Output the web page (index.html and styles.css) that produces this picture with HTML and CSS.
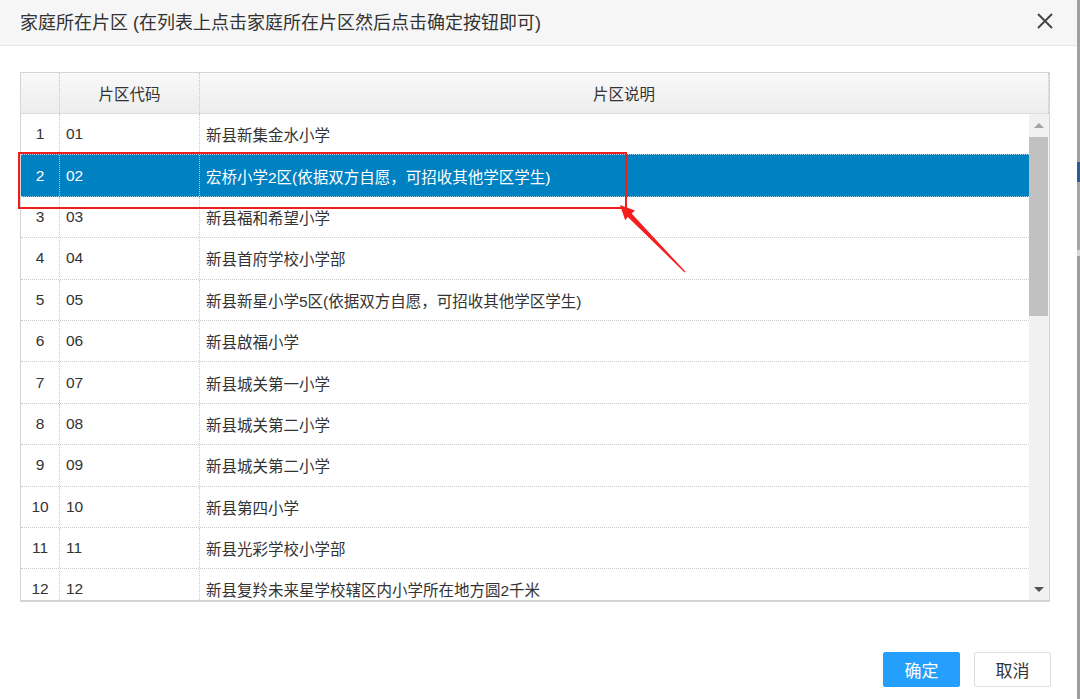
FILE: index.html
```html
<!DOCTYPE html>
<html lang="zh-CN">
<head>
<meta charset="utf-8">
<title>家庭所在片区</title>
<link rel="stylesheet" href="styles.css">
</head>
<body>
<div class="page">
  <div class="dialog">
    <div class="dlg-head">
      <div class="dlg-title">家庭所在片区 (在列表上点击家庭所在片区然后点击确定按钮即可)</div>
      <svg class="dlg-close" width="18" height="18" viewBox="0 0 18 18"><path d="M2 2 L16 16 M16 2 L2 16" stroke="#444" stroke-width="1.9" fill="none"/></svg>
    </div>
    <div class="dlg-body">
      <div class="grid">
        <div class="ghead">
          <div class="c c-num"></div>
          <div class="c c-code">片区代码</div>
          <div class="c c-desc">片区说明</div>
        </div>
        <div class="gbody">
          <div class="rows">
            <div class="row"><div class="c c-num">1</div><div class="c c-code">01</div><div class="c c-desc">新县新集金水小学</div></div>
            <div class="row sel"><div class="c c-num">2</div><div class="c c-code">02</div><div class="c c-desc">宏桥小学2区(依据双方自愿，可招收其他学区学生)</div></div>
            <div class="row"><div class="c c-num">3</div><div class="c c-code">03</div><div class="c c-desc">新县福和希望小学</div></div>
            <div class="row"><div class="c c-num">4</div><div class="c c-code">04</div><div class="c c-desc">新县首府学校小学部</div></div>
            <div class="row"><div class="c c-num">5</div><div class="c c-code">05</div><div class="c c-desc">新县新星小学5区(依据双方自愿，可招收其他学区学生)</div></div>
            <div class="row"><div class="c c-num">6</div><div class="c c-code">06</div><div class="c c-desc">新县啟福小学</div></div>
            <div class="row"><div class="c c-num">7</div><div class="c c-code">07</div><div class="c c-desc">新县城关第一小学</div></div>
            <div class="row"><div class="c c-num">8</div><div class="c c-code">08</div><div class="c c-desc">新县城关第二小学</div></div>
            <div class="row"><div class="c c-num">9</div><div class="c c-code">09</div><div class="c c-desc">新县城关第二小学</div></div>
            <div class="row"><div class="c c-num">10</div><div class="c c-code">10</div><div class="c c-desc">新县第四小学</div></div>
            <div class="row"><div class="c c-num">11</div><div class="c c-code">11</div><div class="c c-desc">新县光彩学校小学部</div></div>
            <div class="row"><div class="c c-num">12</div><div class="c c-code">12</div><div class="c c-desc">新县复羚未来星学校辖区内小学所在地方圆2千米</div></div>
          </div>
          <div class="vscroll">
            <div class="sb-btn"><span class="tri-up"></span></div>
            <div class="sb-thumb"></div>
            <div class="sb-track"></div>
            <div class="sb-btn"><span class="tri-down"></span></div>
          </div>
        </div>
      </div>
      <div class="mark-box"></div>
      <svg class="mark-arrow" width="80" height="80" viewBox="0 0 80 80">
        <polygon points="10,10 25,15.5 21.6,18.6 75.4,76.6 74.6,77.4 17.8,21.9 15.2,25.3" fill="#f51d1d"/>
      </svg>
    </div>
    <div class="dlg-foot">
      <button class="btn btn-primary">确定</button>
      <button class="btn btn-default">取消</button>
    </div>
  </div>
  <div class="behind">
    <div class="bh-a"></div>
    <div class="bh-blue"></div>
    <div class="bh-b"></div>
    <div class="bh-light"></div>
    <div class="bh-c"></div>
  </div>
</div>
</body>
</html>
```
FILE: styles.css
```css
html, body {
  margin: 0;
  padding: 0;
  background: #ffffff;
}
body {
  font-family: "Liberation Sans", "Noto Sans CJK SC", sans-serif;
  color: #333333;
}
.page {
  display: flex;
  width: 1080px;
  height: 699px;
  overflow: hidden;
}
.dialog {
  width: 1077px;
  flex: none;
  display: flex;
  flex-direction: column;
  background: #ffffff;
}
.dlg-head {
  height: 46px;
  box-sizing: border-box;
  background: #f6f6f6;
  border-bottom: 1px solid #e6e6e6;
  display: flex;
  align-items: center;
  justify-content: space-between;
  padding: 0 23px 3px 20px;
}
.dlg-title {
  font-size: 18px;
  color: #333333;
}
.dlg-close {
  display: block;
}
.dlg-body {
  position: relative;
  padding: 26px 0 0 20px;
}
.grid {
  width: 1030px;
  box-sizing: border-box;
  border: 1px solid #d4d4d4;
  border-bottom-width: 2px;
  font-size: 15.5px;
}
.ghead {
  display: flex;
  height: 41px;
  box-sizing: border-box;
  background: linear-gradient(#f9f9f9, #ededed);
  border-bottom: 1px solid #dcdcdc;
}
.ghead .c {
  display: flex;
  align-items: center;
  justify-content: center;
  color: #333333;
  font-size: 15.5px;
}
.c {
  box-sizing: border-box;
  border-right: 1px dotted #c8c8c8;
  white-space: nowrap;
  overflow: hidden;
}
.c-num {
  width: 39px;
  flex: none;
}
.c-code {
  width: 140px;
  flex: none;
}
.c-desc {
  flex: 1;
}
.gbody {
  display: flex;
  height: 486px;
}
.rows {
  flex: 1;
  overflow: hidden;
}
.row {
  display: flex;
  height: 41.4px;
  box-sizing: border-box;
  border-bottom: 1px dotted #cccccc;
}
.row .c {
  display: flex;
  align-items: center;
  color: #333333;
}
.row .c-num {
  justify-content: center;
}
.row .c-code {
  padding-left: 6px;
}
.row .c-desc {
  padding-left: 6px;
  border-right: none;
}
.row.sel {
  background: #0081c2;
  border-top: 1px dotted #9fd0ea;
  border-bottom: 1px dotted #9fd0ea;
  margin-top: -1px;
  height: 42.4px;
}
.row.sel .c {
  color: #ffffff;
  border-right-color: #9fd0ea;
}
.row.sel .c-desc {
  border-right: none;
}
.vscroll {
  width: 20px;
  flex: none;
  background: #f1f1f1;
  display: flex;
  flex-direction: column;
}
.sb-btn {
  height: 23px;
  display: flex;
  align-items: center;
  justify-content: center;
  flex: none;
}
.sb-thumb {
  height: 179px;
  background: #c1c1c1;
  margin: 0 1px 0 0;
  flex: none;
}
.sb-track {
  flex: 1;
}
.tri-up {
  width: 0;
  height: 0;
  border-left: 5px solid transparent;
  border-right: 5px solid transparent;
  border-bottom: 5px solid #a3a3a3;
}
.tri-down {
  width: 0;
  height: 0;
  border-left: 5px solid transparent;
  border-right: 5px solid transparent;
  border-top: 5px solid #505050;
  margin-top: 2px;
}
.mark-box {
  position: absolute;
  left: 18px;
  top: 106px;
  width: 609px;
  height: 57px;
  box-sizing: border-box;
  border: 2px solid #f01d1d;
}
.mark-arrow {
  position: absolute;
  left: 610px;
  top: 149px;
}
.dlg-foot {
  display: flex;
  justify-content: flex-end;
  gap: 14px;
  padding: 50px 26px 0 0;
}
.btn {
  width: 77px;
  height: 35px;
  box-sizing: border-box;
  border-radius: 2px;
  font-family: "Noto Sans CJK SC", sans-serif;
  font-size: 17px;
  padding: 0;
  cursor: pointer;
}
.btn-primary {
  background: #249ffd;
  border: 1px solid #249ffd;
  color: #ffffff;
}
.btn-default {
  background: #ffffff;
  border: 1px solid #dddddd;
  color: #333333;
}
.behind {
  flex: 1;
  display: flex;
  flex-direction: column;
  background: #9b9b9b;
}
.bh-a { height: 162px; background: #a0a0a0; }
.bh-blue { height: 20px; background: #2f5d93; }
.bh-b { height: 68px; background: #a6a6a6; }
.bh-light { height: 6px; background: #d9d9d9; }
.bh-c { flex: 1; background: #9e9e9e; }
```
